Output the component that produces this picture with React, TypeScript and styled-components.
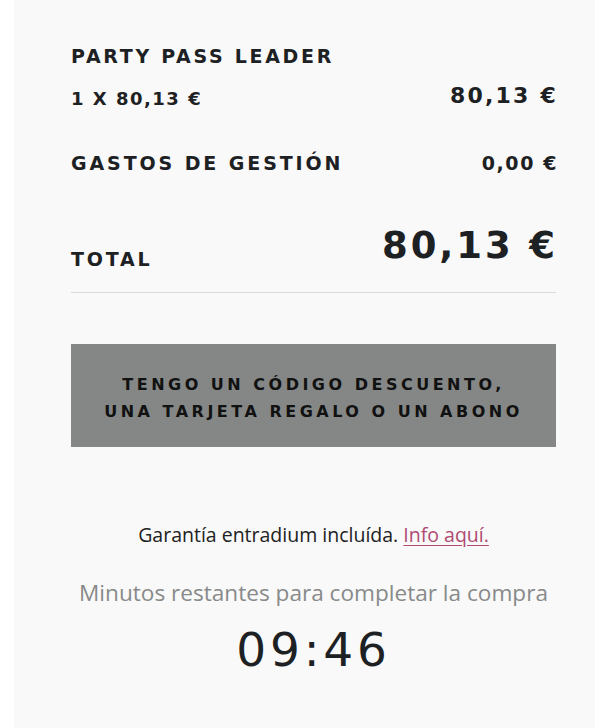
import * as React from 'react';
import styled, { createGlobalStyle } from 'styled-components';

const GlobalStyle = createGlobalStyle`
  html, body {
    margin: 0;
    padding: 0;
    background: #ffffff;
  }
`;

const Panel = styled.div`
  margin-left: 14px;
  min-height: 728px;
  box-sizing: border-box;
  background: #f8f9f8;
  padding: 47px 39px 0 57px;
`;

const Wide = styled.span<{ $size: number; $spacing: number; $weight?: number }>`
  display: block;
  font-family: "DejaVu Sans", "Liberation Sans", sans-serif;
  font-weight: ${(p) => p.$weight ?? 700};
  font-size: ${(p) => p.$size}px;
  letter-spacing: ${(p) => p.$spacing}px;
  line-height: 1;
  color: #1e2123;
  white-space: nowrap;
`;

const ItemName = styled.div`
  margin-bottom: 19px;
`;

const Row = styled.div<{ $align?: string; $gap?: number }>`
  display: flex;
  justify-content: space-between;
  align-items: ${(p) => p.$align ?? 'baseline'};
  margin-bottom: ${(p) => p.$gap ?? 0}px;
  margin-right: -2px;
`;

const Quantity = styled(Wide)`
  margin-top: 5px;
`;

const TotalAmount = styled(Wide)`
  padding-bottom: 5px;
`;

const Divider = styled.hr`
  border: none;
  border-top: 1px solid #d9d9d9;
  margin: 23px 0 51px;
`;

const DiscountButton = styled.button`
  display: block;
  box-sizing: border-box;
  width: 100%;
  height: 103px;
  border: none;
  background: #858786;
  color: #111;
  font-family: "DejaVu Sans", "Liberation Sans", sans-serif;
  font-weight: 700;
  font-size: 16px;
  letter-spacing: 3.5px;
  line-height: 27px;
  text-align: center;
  cursor: pointer;
  padding: 5px 0 0;
`;

const Guarantee = styled.p`
  margin: 76px -20px 0;
  text-align: center;
  font-family: "Open Sans", "Noto Sans", sans-serif;
  font-size: 19.5px;
  color: #222;
  line-height: 24px;

  a {
    color: #b04a72;
    text-decoration: underline;
    text-underline-offset: 3px;
  }
`;

const Remaining = styled.p`
  margin: 32px -20px 0;
  text-align: center;
  font-family: "Open Sans", "Noto Sans", sans-serif;
  font-size: 22.6px;
  color: #888a8a;
  line-height: 28px;
`;

const Timer = styled.div`
  margin-top: 19px;
  text-align: center;
  font-family: "DejaVu Sans", "Liberation Sans", sans-serif;
  font-size: 47px;
  letter-spacing: 3.8px;
  line-height: 1;
  color: #1e2123;
`;

const App = () => {
  return (
    <>
      <GlobalStyle />
      <Panel>
        <ItemName>
          <Wide $size={19} $spacing={2.7}>PARTY PASS LEADER</Wide>
        </ItemName>
        <Row $align="flex-start" $gap={46}>
          <Quantity $size={18} $spacing={1.5}>1 X 80,13 €</Quantity>
          <Wide $size={22} $spacing={2.2}>80,13 €</Wide>
        </Row>
        <Row $gap={54}>
          <Wide $size={19} $spacing={2.9}>GASTOS DE GESTIÓN</Wide>
          <Wide $size={19} $spacing={1.6}>0,00 €</Wide>
        </Row>
        <Row $align="flex-end">
          <Wide $size={19} $spacing={2.8}>TOTAL</Wide>
          <TotalAmount $size={37} $spacing={2.9}>80,13 €</TotalAmount>
        </Row>
        <Divider />
        <DiscountButton>
          TENGO UN CÓDIGO DESCUENTO,
          <br />
          UNA TARJETA REGALO O UN ABONO
        </DiscountButton>
        <Guarantee>
          Garantía entradium incluída. <a href="#">Info aquí.</a>
        </Guarantee>
        <Remaining>Minutos restantes para completar la compra</Remaining>
        <Timer>09:46</Timer>
      </Panel>
    </>
  );
};

export default App;
